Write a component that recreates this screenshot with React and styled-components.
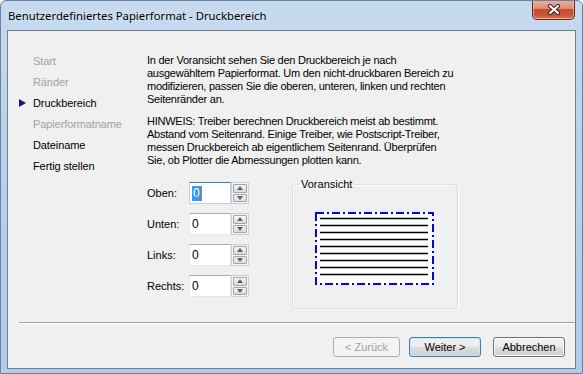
import styled, { createGlobalStyle } from "styled-components";

const GlobalStyle = createGlobalStyle`
  html, body {
    margin: 0;
    padding: 0;
  }
  body {
    font-family: "Liberation Sans", Arial, sans-serif;
    font-size: 11px;
    color: #000;
  }
`;

const steps = [
  { label: "Start", state: "done" },
  { label: "Ränder", state: "done" },
  { label: "Druckbereich", state: "active" },
  { label: "Papierformatname", state: "done" },
  { label: "Dateiname", state: "todo" },
  { label: "Fertig stellen", state: "todo" },
];

const margins = ["Oben", "Unten", "Links", "Rechts"];

export default function App() {
  return (
    <>
      <GlobalStyle />
      <Window>
        <TitleBar>
          <Title>Benutzerdefiniertes Papierformat - Druckbereich</Title>
          <CloseBtn>
            <svg width="14" height="11" viewBox="0 0 14 11">
              <path d="M3 2 L11 9 M11 2 L3 9" stroke="#3b1f1a" strokeWidth="4.2" strokeLinecap="round" />
              <path d="M3 2 L11 9 M11 2 L3 9" stroke="#fff" strokeWidth="2.2" strokeLinecap="round" />
            </svg>
          </CloseBtn>
        </TitleBar>

        <Client>
          <Body>
            <Nav>
              {steps.map((s) => (
                <NavItem key={s.label} $state={s.state}>
                  <Marker $on={s.state === "active"} />
                  {s.label}
                </NavItem>
              ))}
            </Nav>

            <Content>
              <Para>
                In der Voransicht sehen Sie den Druckbereich je nach<br />
                ausgewähltem Papierformat. Um den nicht-druckbaren Bereich zu<br />
                modifizieren, passen Sie die oberen, unteren, linken und rechten<br />
                Seitenränder an.
              </Para>
              <Para $gap>
                HINWEIS: Treiber berechnen Druckbereich meist ab bestimmt.<br />
                Abstand vom Seitenrand. Einige Treiber, wie Postscript-Treiber,<br />
                messen Druckbereich ab eigentlichem Seitenrand. Überprüfen<br />
                Sie, ob Plotter die Abmessungen plotten kann.
              </Para>

              <Controls>
                <Fields>
                  {margins.map((m, i) => (
                    <FieldRow key={m}>
                      <Label>{m}:</Label>
                      <Input $focus={i === 0}>
                        {i === 0 ? <Selected>0</Selected> : "0"}
                      </Input>
                      <Spinner>
                        <SpinBtn>
                          <Arrow $dir="up" />
                        </SpinBtn>
                        <SpinBtn>
                          <Arrow $dir="down" />
                        </SpinBtn>
                      </Spinner>
                    </FieldRow>
                  ))}
                </Fields>

                <Group>
                  <Legend>Voransicht</Legend>
                  <Preview width="119" height="73" viewBox="0 0 119 73">
                    <rect x="1" y="1" width="117" height="71" fill="#fff" stroke="#0000ff" strokeWidth="2" strokeDasharray="8 3 2 3" />
                    {[6, 13, 20, 27, 34, 41, 48, 55, 62].map((y) => (
                      <line key={y} x1="5" x2="113" y1={y + 0.5} y2={y + 0.5} stroke="#000" strokeWidth="1.4" />
                    ))}
                  </Preview>
                </Group>
              </Controls>
            </Content>
          </Body>

          <Footer>
            <Separator />
            <Buttons>
              <Button disabled $w={67}>&lt; Zurück</Button>
              <Button $default $w={72} $ml={9}>Weiter &gt;</Button>
              <Button $w={72} $ml={12}>Abbrechen</Button>
            </Buttons>
          </Footer>
        </Client>
      </Window>
    </>
  );
}

const Window = styled.div`
  width: 583px;
  height: 374px;
  box-sizing: border-box;
  display: flex;
  flex-direction: column;
  border: 1px solid #6a82a0;
  border-radius: 6px 6px 0 0;
  background: linear-gradient(180deg, #c6daef 0%, #b9d1ea 40%, #b2cbe7 100%);
  overflow: hidden;
`;

const TitleBar = styled.div`
  height: 29px;
  display: flex;
  justify-content: space-between;
  align-items: flex-start;
  padding: 0 7px 0 7px;
`;

const Title = styled.div`
  font-family: "Noto Sans", "Liberation Sans", sans-serif;
  font-size: 11.3px;
  line-height: 29px;
  color: #000;
  white-space: nowrap;
  text-shadow: 0 0 6px rgba(255, 255, 255, 0.8);
`;

const CloseBtn = styled.div`
  width: 43px;
  height: 20px;
  margin-top: -1px;
  box-sizing: border-box;
  display: flex;
  align-items: center;
  justify-content: center;
  border: 1px solid #6d2419;
  border-top: none;
  border-radius: 0 0 5px 5px;
  background: linear-gradient(180deg, #eab0a2 0%, #de8c77 45%, #c74a30 50%, #c65a3e 85%, #d98a6a 100%);
  box-shadow: inset 0 0 0 1px rgba(255, 210, 190, 0.55);
`;

const Client = styled.div`
  flex: 1;
  margin: 0 6px 4px 6px;
  display: flex;
  flex-direction: column;
  border: 1px solid #6e8196;
  background: #f0f0f0;
`;

const Body = styled.div`
  flex: 1;
  display: flex;
`;

const Nav = styled.div`
  width: 139px;
  padding-top: 19px;
  display: flex;
  flex-direction: column;
`;

const NavItem = styled.div`
  height: 21px;
  display: flex;
  align-items: center;
  padding-left: 11px;
  white-space: nowrap;
  letter-spacing: -0.1px;
  color: ${(p) => (p.$state === "done" ? "#a3a3a3" : "#000")};
`;

const Marker = styled.span`
  width: 0;
  height: 0;
  margin-right: 7px;
  border-top: 4.5px solid transparent;
  border-bottom: 4.5px solid transparent;
  border-left: 7px solid ${(p) => (p.$on ? "#16167a" : "transparent")};
`;

const Content = styled.div`
  flex: 1;
  padding-top: 23px;
  display: flex;
  flex-direction: column;
`;

const Para = styled.p`
  margin: ${(p) => (p.$gap ? "9px" : "0")} 0 0 0;
  line-height: 13px;
  letter-spacing: -0.25px;
  white-space: nowrap;
`;

const Controls = styled.div`
  margin-top: 10px;
  display: flex;
  align-items: flex-start;
`;

const Fields = styled.div`
  padding-top: 5px;
  display: flex;
  flex-direction: column;
  gap: 9px;
`;

const FieldRow = styled.div`
  height: 22px;
  display: flex;
  align-items: center;
`;

const Label = styled.span`
  width: 42px;
`;

const Input = styled.div`
  width: 42px;
  height: 22px;
  box-sizing: border-box;
  display: flex;
  align-items: center;
  padding-left: 2px;
  background: #fff;
  border: 1px solid ${(p) => (p.$focus ? "#b5d4ea" : "#e3e9ef")};
  border-top-color: ${(p) => (p.$focus ? "#3d7bad" : "#abadb3")};
  font-size: 12px;
`;

const Selected = styled.span`
  background: #3399ff;
  color: #fff;
  line-height: 15px;
  padding: 0 1px;
  box-shadow: 1px 0 0 #e07020;
`;

const Spinner = styled.div`
  width: 18px;
  height: 22px;
  box-sizing: border-box;
  display: flex;
  flex-direction: column;
  gap: 1px;
  padding: 1px;
  border: 1px solid #cfcfcf;
  background: #f4f4f4;
`;

const SpinBtn = styled.div`
  flex: 1;
  display: flex;
  align-items: center;
  justify-content: center;
  border: 1px solid #a5a5a5;
  border-radius: 1px;
  background: linear-gradient(180deg, #f6f6f6 0%, #e8e8e8 50%, #dadada 100%);
`;

const Arrow = styled.span`
  width: 0;
  height: 0;
  border-left: 3.5px solid transparent;
  border-right: 3.5px solid transparent;
  ${(p) =>
    p.$dir === "up"
      ? "border-bottom: 4px solid #4e6189;"
      : "border-top: 4px solid #4e6189;"}
`;

const Group = styled.fieldset`
  margin: 0 0 0 43px;
  padding: 0;
  width: 166px;
  height: 132px;
  box-sizing: border-box;
  border: 1px solid #d5dfe5;
  border-radius: 3px;
  box-shadow: inset 1px 1px 0 #fff, 1px 1px 0 #fff;
  display: block;
`;

const Legend = styled.legend`
  margin-left: 6px;
  padding: 0 2px;
  line-height: 14px;
  font-size: 11px;
`;

const Preview = styled.svg`
  display: block;
  margin: 21px 0 0 22px;
`;

const Footer = styled.div`
  display: flex;
  flex-direction: column;
`;

const Separator = styled.div`
  margin-left: 11px;
  height: 1px;
  background: #a0a0a0;
  border-bottom: 1px solid #fff;
`;

const Buttons = styled.div`
  display: flex;
  justify-content: flex-end;
  padding: 13px 10px 11px 0;
`;

const Button = styled.button`
  width: ${(p) => p.$w}px;
  height: 20px;
  margin-left: ${(p) => p.$ml || 0}px;
  padding: 0;
  font-family: "Liberation Sans", Arial, sans-serif;
  font-size: 11px;
  color: #000;
  border-radius: 3px;
  border: 1px solid ${(p) => (p.$default ? "#3c7fb1" : "#707070")};
  background: linear-gradient(180deg, #f2f2f2 0%, #ebebeb 50%, #dddddd 51%, #cfcfcf 100%);
  box-shadow: inset 0 0 0 1px ${(p) => (p.$default ? "#bfe6f9" : "#fcfcfc")};

  &:disabled {
    color: #a0a0a0;
    border-color: #adb2b5;
    background: #f4f4f4;
    box-shadow: none;
  }
`;
